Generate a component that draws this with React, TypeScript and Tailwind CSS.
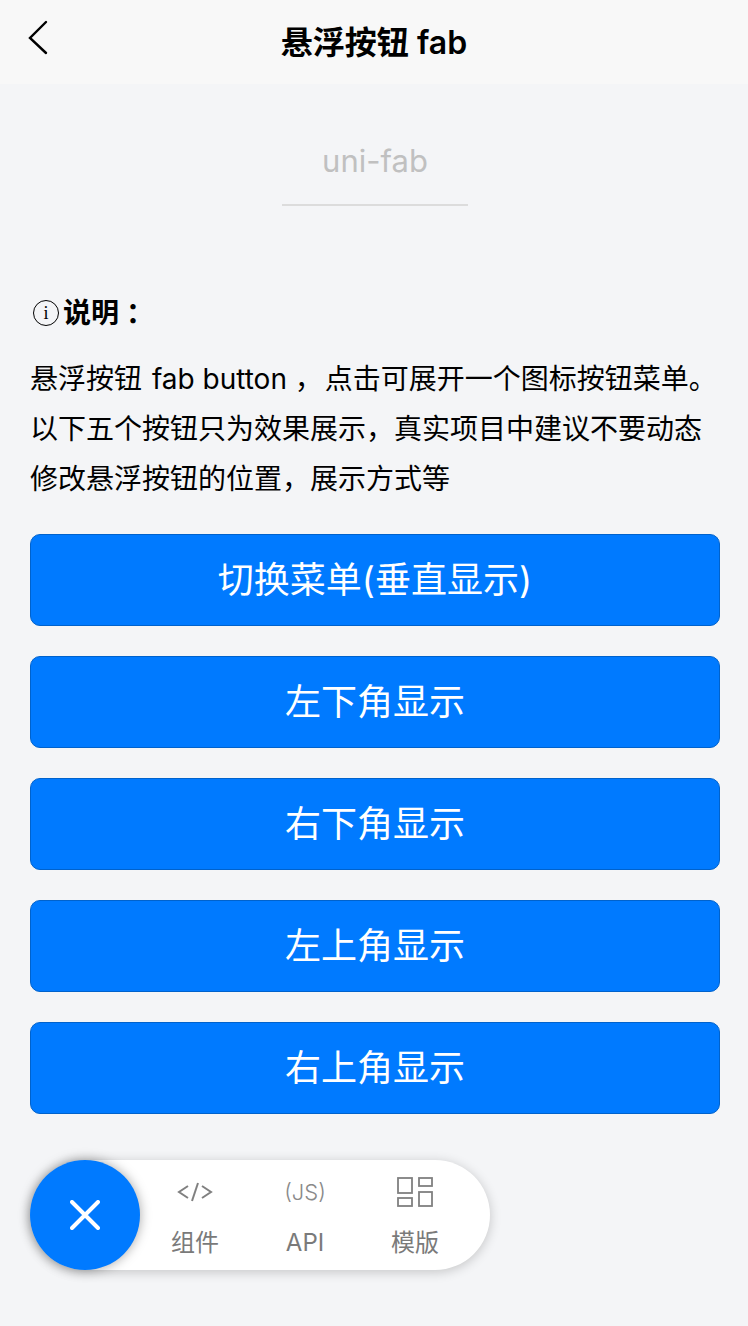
const buttons = ["切换菜单(垂直显示)", "左下角显示", "右下角显示", "左上角显示", "右上角显示"];

function CodeIcon() {
  return (
    <svg width="36" height="24" viewBox="0 0 36 24" fill="none" stroke="#808080" strokeWidth="2">
      <path d="M11 6 L2 12 L11 18" />
      <path d="M21 3 L15 21" />
      <path d="M25 6 L34 12 L25 18" />
    </svg>
  );
}

function TemplateIcon() {
  return (
    <svg width="36" height="30" viewBox="0 0 36 30" fill="none" stroke="#808080" strokeWidth="1.8">
      <rect x="1" y="1" width="14" height="15" />
      <rect x="1" y="21" width="14" height="8" />
      <rect x="22" y="1" width="13" height="8" />
      <rect x="22" y="15" width="13" height="14" />
    </svg>
  );
}

function InfoIcon() {
  return (
    <span className="flex h-[26px] w-[26px] items-center justify-center rounded-full border border-black text-[18px] leading-none font-normal font-['Liberation_Serif',serif]">
      i
    </span>
  );
}

function FabItem({ icon, label }: { icon: React.ReactNode; label: string }) {
  return (
    <div className="flex w-[110px] flex-col items-center">
      <div className="flex h-[40px] items-center justify-center">{icon}</div>
      <span className="mt-[16px] text-[24px] leading-[30px] text-[#7a7a7a]">{label}</span>
    </div>
  );
}

export default function App() {
  return (
    <div className="relative h-[1326px] w-[748px] overflow-hidden bg-[#f4f5f7] font-['Inter','Noto_Sans_CJK_SC',sans-serif] text-black">
      <header className="relative flex h-[84px] items-center justify-center bg-[#f8f8f8]">
        <svg className="absolute left-[26px] top-[20px]" width="24" height="36" viewBox="0 0 24 36" fill="none" stroke="#000" strokeWidth="2.4" strokeLinecap="round">
          <path d="M20 2 L4 18 L20 33" />
        </svg>
        <h1 className="pt-[2px] text-[32px] leading-none font-semibold">悬浮按钮 fab</h1>
      </header>

      <div className="flex flex-col items-center pl-[2px] pt-[57px]">
        <div className="text-[31px] leading-[40px] text-[#c0c0c0]">uni-fab</div>
        <div className="mt-[23px] h-[2px] w-[186px] bg-[#dcdcdc]" />
      </div>

      <section className="pl-[30px] pr-[28px] pt-[85px]">
        <div className="flex items-center gap-[4px] pl-[3px] text-[28px] leading-[44px] font-semibold">
          <InfoIcon />
          <span>说明 ：</span>
        </div>
        <p className="mt-[19px] whitespace-nowrap text-[28px] leading-[50px]">
          悬浮按钮 <span className="ml-[2px]">fab button</span> <span className="mr-[2px]">，</span>点击可展开一个图标按钮菜单。
          <br />
          以下五个按钮只为效果展示，真实项目中建议不要动态
          <br />
          修改悬浮按钮的位置，展示方式等
        </p>

        <div className="mt-[30px] flex flex-col gap-[30px]">
          {buttons.map((text) => (
            <button
              key={text}
              className="h-[92px] rounded-[10px] border border-[#0062cc] bg-[#007aff] text-[36px] text-white"
            >
              {text}
            </button>
          ))}
        </div>
      </section>

      <div className="absolute left-[30px] top-[1160px] flex h-[110px] w-[460px] items-center rounded-full bg-white pl-[110px] shadow-[0_2px_12px_rgba(0,0,0,0.2)]">
        <FabItem icon={<CodeIcon />} label="组件" />
        <FabItem
          icon={<span className="text-[22px] leading-none font-light text-[#8a8a8a]">(JS)</span>}
          label="API"
        />
        <FabItem icon={<TemplateIcon />} label="模版" />
        <button className="absolute left-0 top-0 flex h-[110px] w-[110px] items-center justify-center rounded-full bg-[#007aff] shadow-[0_0_12px_rgba(0,0,0,0.35)]">
          <svg width="30" height="30" viewBox="0 0 30 30" stroke="#fff" strokeWidth="4" strokeLinecap="round">
            <path d="M2 2 L28 28 M28 2 L2 28" />
          </svg>
        </button>
      </div>
    </div>
  );
}
